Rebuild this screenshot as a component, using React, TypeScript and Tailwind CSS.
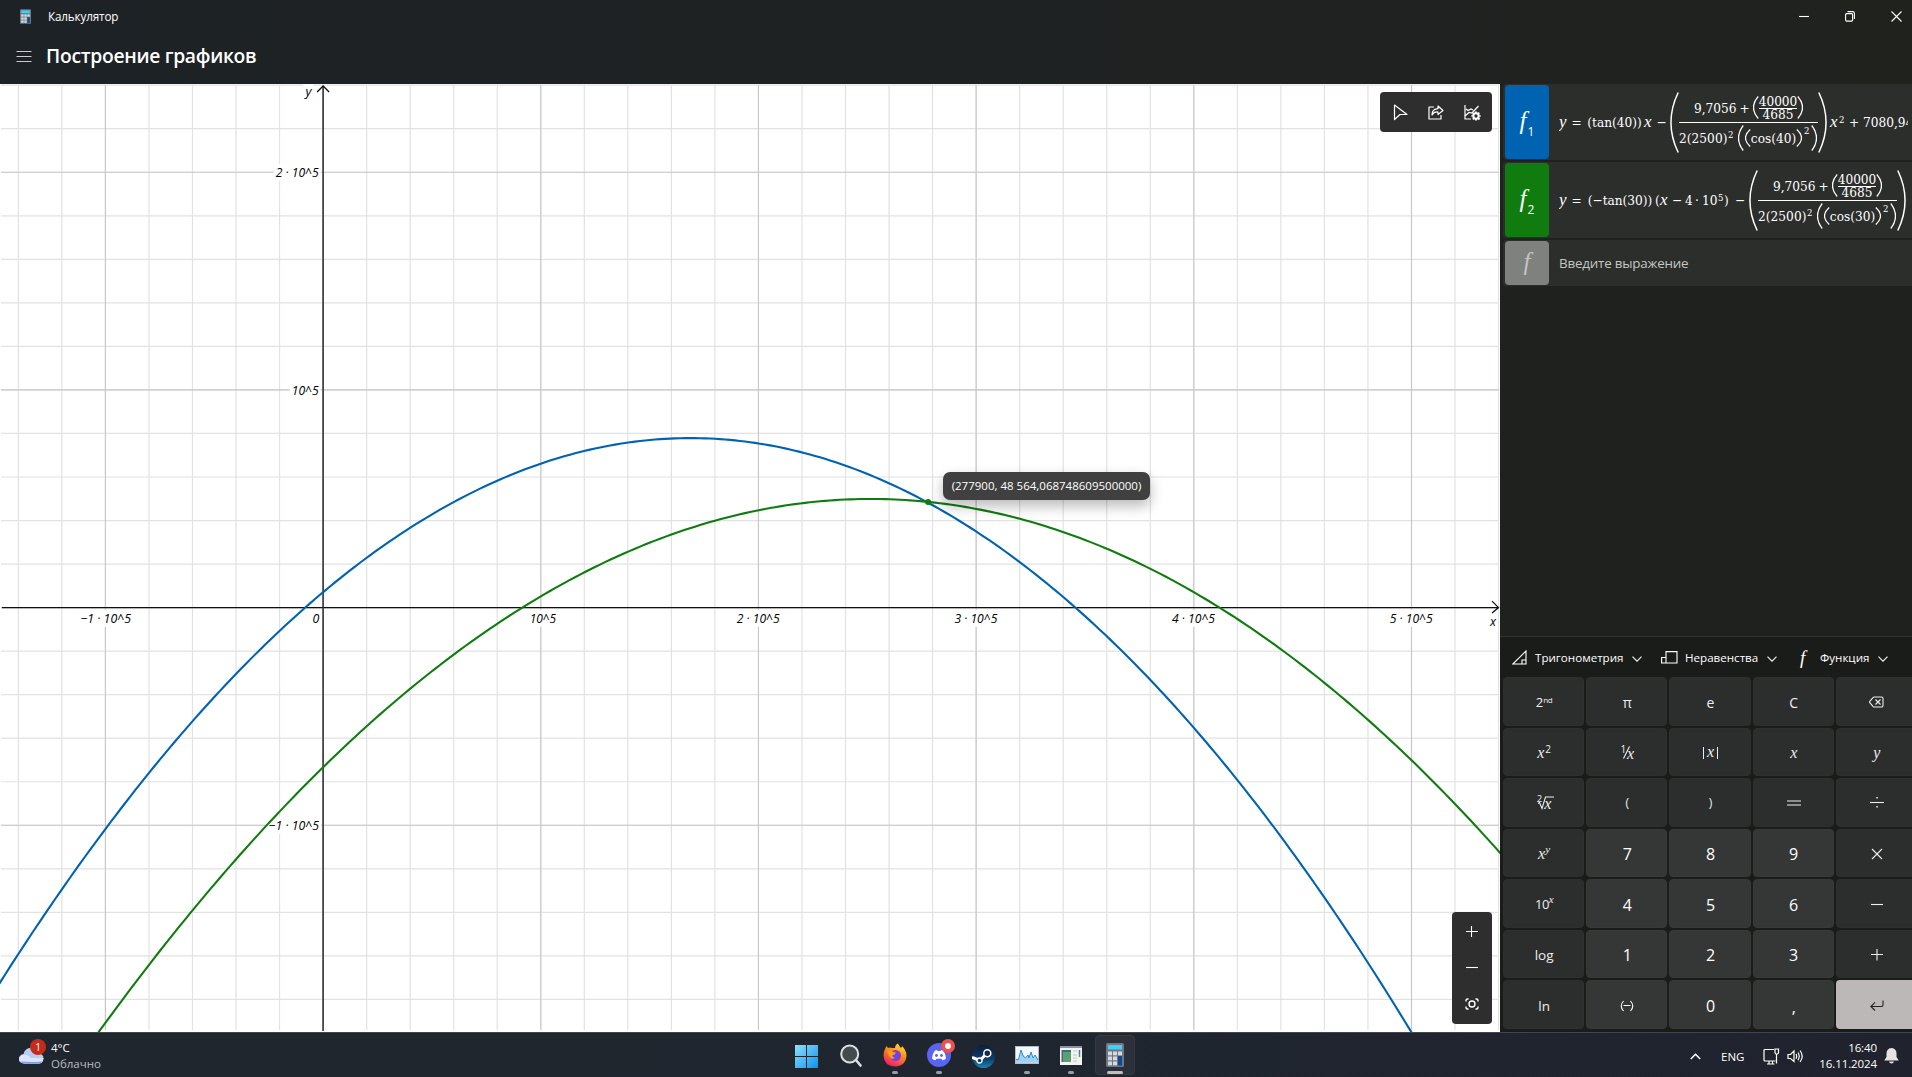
import React from "react";

const UI = "font-['Open_Sans','Noto_Sans',sans-serif]";
const MATH = "font-['DejaVu_Serif_Condensed','DejaVu_Serif',serif]";

/* ---------- graph ---------- */

const W = 1500;
const H = 948;
const X0 = 323.1;
const Y0 = 523.6;
const UNIT = 217.68;
const K = UNIT / 100000;

const rad = (d: number) => (d * Math.PI) / 180;
const G = 9.7056 + 40000 / 4685;
const drag = (deg: number) => G / (2 * 2500 * 2500 * Math.cos(rad(deg)) ** 2);
const f1 = (x: number) => Math.tan(rad(40)) * x - drag(40) * x * x + 7080.94;
const f2 = (x: number) => {
  const u = x - 400000;
  return -Math.tan(rad(30)) * u - drag(30) * u * u + 7080.94;
};

function curve(f: (x: number) => number) {
  const pts: string[] = [];
  for (let px = -5; px <= W + 5; px += 5) {
    pts.push(`${px},${(Y0 - f((px - X0) / K) * K).toFixed(2)}`);
  }
  return "M" + pts.join("L");
}

const steps = (from: number, to: number) => Array.from({ length: to - from + 1 }, (_, i) => from + i);

function Label({ x, y, w, children }: { x: number; y: number; w: number; children: string }) {
  return (
    <g>
      <rect x={x - 2} y={y - 13} width={w + 4} height={17} fill="#fff" />
      <text x={x} y={y} textLength={w} lengthAdjust="spacingAndGlyphs">
        {children}
      </text>
    </g>
  );
}

function Graph() {
  return (
    <svg width={W} height={H} viewBox={`0 0 ${W} ${H}`} className="block">
      <rect width={W} height={H} fill="#fff" />
      <g stroke="#e2e2e2" strokeWidth="1.2">
        {steps(-7, 27).map((i) => (
          <line key={"v" + i} x1={X0 + (i * UNIT) / 5} x2={X0 + (i * UNIT) / 5} y1="1" y2={H - 2} />
        ))}
        {steps(-9, 12).map((i) => (
          <line key={"h" + i} y1={Y0 - (i * UNIT) / 5} y2={Y0 - (i * UNIT) / 5} x1="1" x2={W - 1} />
        ))}
      </g>
      <g stroke="#c8c8c8" strokeWidth="1.1">
        {steps(-1, 5).map((i) => (
          <line key={"v" + i} x1={X0 + i * UNIT} x2={X0 + i * UNIT} y1="1" y2={H - 2} />
        ))}
        {steps(-1, 2).map((i) => (
          <line key={"h" + i} y1={Y0 - i * UNIT} y2={Y0 - i * UNIT} x1="1" x2={W - 1} />
        ))}
      </g>
      <g className="font-['Open_Sans','Noto_Sans',sans-serif] italic" fontSize="12.5" fill="#000">
        <Label x={275.7} y={92.8} w={43}>2 · 10^5</Label>
        <Label x={291.7} y={310.6} w={27}>10^5</Label>
        <Label x={268.6} y={745.8} w={50.5}>−1 · 10^5</Label>
        <Label x={80.5} y={538.8} w={50.5}>−1 · 10^5</Label>
        <Label x={312.5} y={538.8} w={6.8}>0</Label>
        <Label x={529.7} y={538.8} w={26.5}>10^5</Label>
        <Label x={736.7} y={538.8} w={43}>2 · 10^5</Label>
        <Label x={954.4} y={538.8} w={43}>3 · 10^5</Label>
        <Label x={1172} y={538.8} w={43}>4 · 10^5</Label>
        <Label x={1389.7} y={538.8} w={43}>5 · 10^5</Label>
        <Label x={305.5} y={12} w={6}>y</Label>
        <Label x={1490} y={542} w={6}>x</Label>
      </g>
      <g fill="none" strokeWidth="1.3">
        <path d={`M2 ${Y0}H1498M1492 ${Y0 - 6.5}L1498.5 ${Y0}L1492 ${Y0 + 5.5}`} stroke="#111" />
        <path d={`M${X0} 2V${H - 1}`} stroke="#2c2c30" strokeWidth="1.5" />
        <path d={`M${X0 - 6} 8L${X0} 2L${X0 + 6} 8`} stroke="#111" />
      </g>
      <path d={curve(f1)} fill="none" stroke="#0063b1" strokeWidth="2.1" />
      <path d={curve(f2)} fill="none" stroke="#107c10" strokeWidth="2.1" />
      <circle cx={X0 + 277900 * K} cy={Y0 - 48564.07 * K} r="3" fill="#107c10" />
    </svg>
  );
}

/* ---------- formulas ---------- */

function Paren({ w, h, flip, sw = 1.3 }: { w: number; h: number; flip?: boolean; sw?: number }) {
  const d = flip
    ? `M0.8 0.5Q${w * 1.7} ${h / 2} 0.8 ${h - 0.5}`
    : `M${w - 0.8} 0.5Q${-w * 0.7} ${h / 2} ${w - 0.8} ${h - 0.5}`;
  return (
    <svg width={w} height={h} className="shrink-0">
      <path d={d} fill="none" stroke="#fff" strokeWidth={sw} />
    </svg>
  );
}

function BigFraction({ angle }: { angle: number }) {
  return (
    <>
      <Paren w={9} h={61} sw={1.5} />
      <div className="flex h-[59px] w-[139px] shrink-0 flex-col items-center">
        <div className="flex h-[29px] w-full items-center justify-center pt-[1px]">
          <span className="w-[42px]">9,7056</span>
          <span className="w-[17px] text-center">+</span>
          <Paren w={6} h={23} />
          <div className="flex w-[38px] flex-col items-center leading-[11px]">
            <span className="h-[12px]">40000</span>
            <span className="h-px w-full bg-white" />
            <span className="h-[11px]">4685</span>
          </div>
          <Paren w={6} h={23} flip />
        </div>
        <div className="h-px w-full shrink-0 bg-white" />
        <div className="flex h-[29px] w-full items-center pt-px">
          <span className="w-[49px] shrink-0 tracking-[0.05px]">2(2500)</span>
          <span className="w-[10px] shrink-0 pb-[5px] text-[9.5px]">2</span>
          <Paren w={6} h={26} />
          <span className="w-px shrink-0" />
          <Paren w={6} h={18} />
          <span className="flex w-[45px] shrink-0 justify-center">cos({angle})</span>
          <Paren w={6} h={18} flip />
          <span className="w-[9px] shrink-0 pb-[14px] pl-[2px] text-[9.5px]">2</span>
          <Paren w={6} h={26} flip />
        </div>
      </div>
      <Paren w={9} h={61} flip sw={1.5} />
    </>
  );
}

const V = ({ children }: { children: string }) => (
  <span className="w-[9px] shrink-0 font-['Liberation_Serif',serif] text-[17px] italic">{children}</span>
);

function Row({ color, index, children }: { color: string; index: string; children: React.ReactNode }) {
  return (
    <div className="flex h-[76px] items-center rounded-l bg-[#2c2e2c] pl-[2px]">
      <div className={`flex h-[74px] w-[44px] shrink-0 items-center justify-center rounded-[4px] text-white ${color}`}>
        <span className="pb-[3px] font-['Liberation_Serif',serif] text-[25px] italic">f</span>
        <span className="ml-px pt-[20px] font-['Open_Sans',sans-serif] text-[12px]">{index}</span>
      </div>
      <div
        className={`ml-[10px] flex w-[349px] items-center overflow-hidden text-[13.5px] leading-[16px] whitespace-nowrap text-white ${MATH}`}
      >
        {children}
      </div>
    </div>
  );
}

/* ---------- keypad ---------- */

const X = <span className="font-['Liberation_Serif',serif] text-[16px] italic">x</span>;
const Sup = ({ children }: { children: string }) => (
  <sup className="font-['Liberation_Serif',serif] text-[11px] italic">{children}</sup>
);

const ico = { fill: "none", stroke: "currentColor", strokeWidth: 1.1 } as const;

const KEYS: { k: string; c: React.ReactNode; n?: boolean }[] = [
  { k: "2nd", c: <span>2<sup className="text-[8px] tracking-[-0.3px]">nd</sup></span> },
  { k: "pi", c: <span className="text-[14px]">π</span> },
  { k: "e", c: <span className="text-[14px]">e</span> },
  { k: "C", c: <span className="text-[14px]">C</span> },
  {
    k: "bs",
    c: (
      <svg width="15" height="12" viewBox="0 0 15 12" {...ico}>
        <path d="M5.2 1H12.5A1.5 1.5 0 0 1 14 2.5V9.5A1.5 1.5 0 0 1 12.5 11H5.2Q4.6 11 4.2 10.6L.8 6.7Q.3 6 .8 5.3L4.2 1.4Q4.6 1 5.2 1ZM6.5 3.5L11.5 8.5M11.5 3.5L6.5 8.5" />
      </svg>
    ),
  },
  { k: "x2", c: <span>{X}<sup className="ml-px text-[10px]">2</sup></span> },
  {
    k: "1/x",
    c: (
      <span className="flex items-center">
        <span className="pb-[7px] text-[10px]">1</span>
        <svg width="7" height="13" className="mx-[-3px]" {...ico}><path d="M6.5 .5L.5 12.5" /></svg>
        <span className="pt-[2px] font-['Liberation_Serif',serif] text-[16px] italic">x</span>
      </span>
    ),
  },
  {
    k: "abs",
    c: (
      <span className="flex items-center gap-[3px]">
        <span className="h-[12px] w-px bg-current" />
        <span className="pb-px font-['Liberation_Serif',serif] text-[16px] leading-[16px] italic">x</span>
        <span className="h-[12px] w-px bg-current" />
      </span>
    ),
  },
  { k: "x", c: <span className="pt-[1px]">{X}</span> },
  { k: "y", c: <span className="pt-[1px] font-['Liberation_Serif',serif] text-[16px] italic">y</span> },
  {
    k: "root",
    c: (
      <span className="flex items-center">
        <span className="pb-[9px] text-[9.5px] leading-[9px]">2</span>
        <svg width="16" height="14" className="-mr-[10px] -ml-[4px]" {...ico}><path d="M0 7.5L1.5 6.5L4 12.5L7.5 1H16" /></svg>
        <span className="pt-[2px] font-['Liberation_Serif',serif] text-[16px] leading-[12px] italic">x</span>
      </span>
    ),
  },
  { k: "(", c: <span className="text-[12px]">(</span> },
  { k: ")", c: <span className="text-[12px]">)</span> },
  { k: "=", c: <svg width="14" height="7" {...ico}><path d="M0 1H14M0 5H14" /></svg> },
  {
    k: "div",
    c: (
      <svg width="14" height="12" {...ico}>
        <path d="M0 5.5H14" />
        <rect x="6.3" y="0" width="1.5" height="1.5" fill="currentColor" stroke="none" />
        <rect x="6.3" y="9" width="1.5" height="1.5" fill="currentColor" stroke="none" />
      </svg>
    ),
  },
  { k: "xy", c: <span>{X}<Sup>y</Sup></span> },
  { k: "7", c: "7", n: true },
  { k: "8", c: "8", n: true },
  { k: "9", c: "9", n: true },
  { k: "mul", c: <svg width="12" height="12" {...ico}><path d="M1 1L11 11M11 1L1 11" /></svg> },
  { k: "10x", c: <span className="tracking-[-0.5px]">10<Sup>x</Sup></span> },
  { k: "4", c: "4", n: true },
  { k: "5", c: "5", n: true },
  { k: "6", c: "6", n: true },
  { k: "sub", c: <svg width="12" height="12" {...ico}><path d="M0 5.5H12" /></svg> },
  { k: "log", c: <span className="text-[13.5px]">log</span> },
  { k: "1", c: "1", n: true },
  { k: "2", c: "2", n: true },
  { k: "3", c: "3", n: true },
  { k: "add", c: <svg width="12" height="12" {...ico}><path d="M0 5.5H12M6 0V11.5" /></svg> },
  { k: "ln", c: <span className="text-[13.5px]">ln</span> },
  {
    k: "neg",
    c: <svg width="14" height="12" {...ico}><path d="M3.5 1Q-1 6 3.5 11M10.5 1Q15 6 10.5 11M3.5 5.5H10.5" /></svg>,
    n: true,
  },
  { k: "0", c: "0", n: true },
  { k: ",", c: <span className="pt-[3px]">,</span>, n: true },
  {
    k: "enter",
    c: <svg width="14" height="12" {...ico}><path d="M13 .5V5Q13 6.5 11.5 6.5H1M5 2.300L.9 6.500L5 10.500" /></svg>,
  },
];

const Chevron = () => (
  <svg width="10" height="6" fill="none" stroke="#eee" strokeWidth="1.2" className="mt-[2px] shrink-0">
    <path d="M.5 .7L5 5.2L9.5 .7" />
  </svg>
);

/* ---------- shared icons ---------- */

function CalcIcon({ w, h }: { w: number; h: number }) {
  return (
    <svg width={w} height={h} viewBox="0 0 18 24">
      <rect width="18" height="24" rx="1.5" fill="#6f7881" />
      <rect x="2" y="2" width="14" height="4.5" fill="#3fd0f5" />
      {[8.5, 13.5, 18.5].map((y) =>
        [2, 7, 12].map((x) =>
          x === 12 && y > 9 ? null : <rect key={`${x}-${y}`} x={x} y={y} width="4" height="3.8" fill="#d5dadf" />
        )
      )}
      <rect x="12" y="13" width="4" height="9.5" fill="#114a8b" />
    </svg>
  );
}

function TaskItem({ w, children, dot }: { w: number; children: React.ReactNode; dot?: boolean }) {
  return (
    <div className="relative flex h-[40px] shrink-0 items-center justify-center" style={{ width: w }}>
      {children}
      {dot && <span className="absolute bottom-[1px] h-[3px] w-[6px] rounded-full bg-[#9b9da2]" />}
    </div>
  );
}

/* ---------- page ---------- */

export default function App() {
  return (
    <div className={`flex h-[1077px] w-[1912px] flex-col overflow-hidden bg-[#1f211f] text-white ${UI}`}>
      <header className="flex h-[84px] shrink-0 flex-col bg-linear-to-r from-[#1d2226] to-[#20221e]">
        <div className="flex h-[33px] items-center pl-[20px]">
          <CalcIcon w={11} h={15} />
          <span className="ml-[17px] text-[11.7px] tracking-[-0.15px]">Калькулятор</span>
          <div className="mr-[10px] ml-auto flex items-center gap-[36px]">
            <svg width="10" height="10" {...ico}><path d="M0 4.5H10" /></svg>
            <svg width="10" height="11" {...ico}>
              <rect x=".6" y="2.6" width="7" height="7.5" rx="1" />
              <path d="M2.5 .6H7.5Q9.4 .6 9.4 2.5V8" />
            </svg>
            <svg width="11" height="11" {...ico}><path d="M.5 .5L10.5 10.5M10.5 .5L.5 10.5" /></svg>
          </div>
        </div>
        <div className="flex h-[46px] items-center pl-[16px]">
          <svg width="16" height="11" fill="none" stroke="#c9cccd" strokeWidth="1"><path d="M.5 .5H15.5M.5 5.5H15.5M.5 10.5H15.5" /></svg>
          <h1 className="ml-[14px] text-[19.3px] font-semibold tracking-[-0.3px]">Построение графиков</h1>
        </div>
      </header>

      <main className="flex h-[948px] shrink-0">
        <section className="relative w-[1500px] shrink-0">
          <Graph />
          <div className="absolute top-[8px] left-[1380px] flex h-[40px] w-[112px] items-center justify-between rounded-[4px] bg-[#2e2e2f] pr-[11px] pl-[13px]">
            <svg width="15" height="17" {...ico} strokeWidth="1.2"><path d="M1.500 1L14 10.500H7L1.500 15.500Z" strokeLinejoin="round" /></svg>
            <svg width="16" height="15" {...ico} strokeWidth="1.2" strokeLinejoin="round">
              <path d="M6 2H1V14H13V10" />
              <path d="M10 1L15 5.5L10 9.5V7Q6 6.5 4 10Q4 4 10 3.7Z" />
            </svg>
            <svg width="17" height="17" {...ico} strokeWidth="1.2">
              <path d="M1 1V15H7M1 12L5 8.500L8 9L14.5 2M2 5L4 6.500L7 5L9 6" />
              <circle cx="12" cy="12" r="2.7" strokeWidth="2" />
              <path d="M12 7.500V9M12 15V16.500M7.500 12H8.500M15.500 12H16.500M8.800 8.800L9.800 9.800M14.500 14.500L15.500 15.500M15.300 8.700L14.300 9.700M8.800 15.300L9.800 14.300" strokeWidth="1.8" />
            </svg>
          </div>
          <div className="absolute top-[388px] left-[943px] flex h-[28px] w-[207px] items-center justify-center rounded-[7px] bg-[#404040] text-[11.5px] whitespace-nowrap shadow-[0_6px_14px_rgba(0,0,0,0.28)]">
            (277900, 48 564,068748609500000)
          </div>
          <div className="absolute top-[828px] left-[1452px] flex h-[112px] w-[40px] flex-col items-center rounded-[4px] bg-[#2e2e2f] pt-[13px]">
            <svg width="12" height="12" {...ico}><path d="M0 6.5H12M5.5 1V12" /></svg>
            <svg width="12" height="12" className="mt-[24px]" {...ico}><path d="M0 6.5H12" /></svg>
            <svg width="14" height="12" className="mt-[25px]" {...ico} strokeWidth="1.4">
              <circle cx="7" cy="6" r="3" />
              <path d="M1 3.5V2.5Q1 1 2.5 1H3.5M10.5 1H11.5Q13 1 13 2.5V3.5M1 8.5V9.5Q1 11 2.5 11H3.5M10.5 11H11.5Q13 11 13 9.5V8.5" />
            </svg>
          </div>
        </section>

        <aside className="flex w-[412px] flex-col">
          <div className="flex h-[552px] shrink-0 flex-col gap-[2px] pl-[3px]">
            <Row color="bg-[#0063b1]" index="1">
              <V>y</V>
              <span className="w-[17px] shrink-0 text-center">=</span>
              <span className="flex w-[59px] shrink-0 justify-center">(tan(40))</span>
              <V>x</V>
              <span className="w-[17px] shrink-0 text-center">−</span>
              <BigFraction angle={40} />
              <span className="w-[3px] shrink-0" />
              <V>x</V>
              <span className="w-[6px] shrink-0 pb-[5px] text-[9.5px]">2</span>
              <span className="w-[18px] shrink-0 text-center">+</span>
              <span className="shrink-0">7080,94</span>
            </Row>
            <Row color="bg-[#107c10]" index="2">
              <V>y</V>
              <span className="w-[17px] shrink-0 text-center">=</span>
              <span className="flex w-[70px] shrink-0 justify-center">(−tan(30))</span>
              <span className="w-[5px] shrink-0">(</span>
              <V>x</V>
              <span className="w-[16px] shrink-0 text-center">−</span>
              <span className="w-[10px] shrink-0">4</span>
              <span className="w-[7px] shrink-0">·</span>
              <span className="w-[16px] shrink-0">10</span>
              <span className="w-[6px] shrink-0 pb-[5px] text-[9.5px]">5</span>
              <span className="w-[7px] shrink-0">)</span>
              <span className="w-[18px] shrink-0 text-center">−</span>
              <BigFraction angle={30} />
            </Row>
            <div className="flex h-[46px] items-center rounded-l bg-[#2c2e2c] pl-[2px]">
              <div className="flex h-[44px] w-[44px] items-center justify-center rounded-[4px] bg-[#7f817f] pb-[3px] font-['Liberation_Serif',serif] text-[25px] text-[#c3c4c3] italic">
                f
              </div>
              <span className="ml-[10px] text-[13.4px] tracking-[-0.2px] text-[#c5c6c5]">Введите выражение</span>
            </div>
          </div>

          <div className="flex h-[396px] shrink-0 flex-col border-t border-[#303230] bg-[#1a1c1a]">
            <div className="flex h-[40px] shrink-0 items-center pt-[1px] pl-[12px] text-[11.6px] whitespace-nowrap">
              <svg width="15" height="15" {...ico}><path d="M.8 14H14V1ZM10 14V10H14" /></svg>
              <span className="ml-[8px] w-[97px]">Тригонометрия</span>
              <Chevron />
              <svg width="17" height="13" className="ml-[19px]" {...ico}><path d="M5 .6H16V12H5ZM5 6.5H.6V12H5" /></svg>
              <span className="ml-[7px] w-[82px]">Неравенства</span>
              <Chevron />
              <span className="ml-[23px] w-[20px] font-['Liberation_Serif',serif] text-[19px] leading-none italic">f</span>
              <span className="w-[58px]">Функция</span>
              <Chevron />
            </div>
            <div className="w-[412px] overflow-hidden pl-[3px]">
              <div className="grid h-[352px] w-[414px] grid-cols-5 grid-rows-7 gap-[2px]">
                {KEYS.map(({ k, c, n }) => (
                  <div
                    key={k}
                    className={
                      "flex items-center justify-center rounded-[4px] pt-[2px] pl-px " +
                      (k === "enter"
                        ? "bg-[#bcb8b7] text-[#222]"
                        : n
                          ? "border border-[#383a3a] bg-[#353737] text-[16px]"
                          : "border border-[#2e3030] bg-[#2c2e2e] text-[13px] text-[#eee]")
                    }
                  >
                    {c}
                  </div>
                ))}
              </div>
            </div>
          </div>
        </aside>
      </main>

      <footer className="flex h-[45px] shrink-0 items-center border-t border-[#42454a] bg-linear-to-r from-[#20262d] via-[#1f262f] to-[#20232e]">
        <div className="flex w-[795px] items-center">
          <div className="relative ml-[19px] h-[24px] w-[27px]">
            <svg width="25" height="17" viewBox="0 0 25 17" className="mt-[4px]">
              <path d="M5 16.5Q0 16 0 11.5Q.5 7.5 4.5 7Q6 1 12 .8Q18 1 19.5 6Q24.5 7 24.5 11.5Q24 16 20 16.5Z" fill="#b9cdf3" />
              <path d="M0 11.5Q1 8 4.5 8Q9 7 11.5 11H24.5Q24 16.5 20 16.5H5Q0 16 0 11.5Z" fill="#dbe6fa" />
              <path d="M1 14.5Q3 16.5 6 16.5H19Q22.500 16.500 24 14Q20 15.500 1 14.500Z" fill="#7ba2e8" />
            </svg>
            <span className="absolute top-[-4px] left-[11px] flex h-[16px] w-[16px] items-center justify-center rounded-full bg-[#c42b1c] text-[10px]">1</span>
          </div>
          <div className="ml-[5px] pt-[2px] text-[11.5px] leading-[16px]">
            <div>4°C</div>
            <div className="text-[#b9bcc0]">Облачно</div>
          </div>
        </div>

        <div className="flex w-[340px] shrink-0 items-center">
          <svg width="23" height="23" viewBox="0 0 23 23" className="mt-[2px]">
            <defs>
              <linearGradient id="win" x1="0" y1="0" x2="1" y2="1">
                <stop offset="0" stopColor="#8fe0fc" />
                <stop offset="1" stopColor="#0a93ee" />
              </linearGradient>
            </defs>
            <path d="M0 0H11V11H0ZM12 0H23V11H12ZM0 12H11V23H0ZM12 12H23V23H12Z" fill="url(#win)" />
          </svg>
          <TaskItem w={66}>
            <svg width="23" height="23" viewBox="0 0 23 23" className="mt-px">
              <circle cx="9.7" cy="10" r="8.5" fill="#454a51" stroke="#dcdfe3" strokeWidth="2" />
              <path d="M16 16L20.500 21.500" stroke="#dcdfe3" strokeWidth="2.6" strokeLinecap="round" />
            </svg>
          </TaskItem>
          <TaskItem w={22} dot>
            <svg width="24" height="24" viewBox="0 0 24 24" className="shrink-0">
              <defs>
                <linearGradient id="fox" x1=".8" y1="0" x2=".3" y2="1">
                  <stop offset="0" stopColor="#ffe63a" />
                  <stop offset=".45" stopColor="#ff8a16" />
                  <stop offset="1" stopColor="#f5156c" />
                </linearGradient>
              </defs>
              <path d="M2 6L3.5 3L5 5Q7 4 9 5L12 5Q12 2 15 .5Q16 3 18 5Q19 4 19 3Q23 7 23.5 12Q23 23 12 23.5Q1 23 .5 12.5Q.5 9 2 6Z" fill="url(#fox)" />
              <circle cx="12.5" cy="12.5" r="5.5" fill="#7a3fe0" />
              <path d="M4 8Q8 6.5 10 9L13 9.5Q12 12 9.5 12Q9 14 12 15Q8 17 6 13Z" fill="#ffa01c" />
            </svg>
          </TaskItem>
          <TaskItem w={66} dot>
            <svg width="24" height="24" viewBox="0 0 24 24">
              <circle cx="12" cy="12" r="12" fill="#5865f2" />
              <path d="M8 7.5L10 7L10.5 8H13.5L14 7L16 7.5Q19 11 19 15.5Q17.5 17 15.5 17.2L14.5 15.8H9.5L8.5 17.2Q6.5 17 5 15.5Q5 11 8 7.5Z" fill="#fff" />
              <circle cx="9.5" cy="12.5" r="1.4" fill="#5865f2" />
              <circle cx="14.5" cy="12.5" r="1.4" fill="#5865f2" />
            </svg>
            <span className="absolute top-[4px] left-[35px] h-[14px] w-[14px] rounded-full border-[4px] border-[#f0504e] bg-white" />
          </TaskItem>
          <TaskItem w={22}>
            <svg width="23" height="23" viewBox="0 0 23 23" className="mt-[2px] shrink-0">
              <defs>
                <linearGradient id="steam" x1="0" y1="0" x2="0" y2="1">
                  <stop offset="0" stopColor="#111d3e" />
                  <stop offset=".6" stopColor="#0d3c6e" />
                  <stop offset="1" stopColor="#1387b8" />
                </linearGradient>
              </defs>
              <circle cx="11.5" cy="11.5" r="11.5" fill="url(#steam)" />
              <path d="M0 12.5L8 15.5L15 8" stroke="#fff" strokeWidth="3" fill="none" />
              <circle cx="7.5" cy="15.5" r="2.5" fill="#0d3c6e" stroke="#fff" strokeWidth="1.3" />
              <circle cx="15.3" cy="8.2" r="3.5" fill="#15264b" stroke="#fff" strokeWidth="1.5" />
            </svg>
          </TaskItem>
          <TaskItem w={66} dot>
            <svg width="24" height="18" viewBox="0 0 24 18">
              <rect width="24" height="18" fill="#b5bcc3" />
              <rect x="1" y="1" width="22" height="15.5" fill="#f2f7fb" />
              <path d="M1 13L4 13L6 4L9 10L11 12L13 9L14 11L16 6L18 12L20 9L23 14V16.5H1Z" fill="#9fd3f5" />
              <path d="M1 13.5H3.5L6 4L8 10L10.5 12L13 9L14 12L16 6L18 12L20 9L23 14" fill="none" stroke="#2d8dd0" strokeWidth="1" />
            </svg>
          </TaskItem>
          <TaskItem w={22} dot>
            <svg width="22" height="19" viewBox="0 0 22 19" className="shrink-0">
              <rect width="22" height="19" fill="#f3f3f1" />
              <rect width="22" height="2" fill="#8e939b" />
              <rect x="1.5" y="4" width="9.5" height="12" fill="#46688d" />
              <rect x="3" y="6" width="8" height="10" fill="#5da06f" />
              <path d="M13 5H17M13 9H17M13 12H17M13 15H17" stroke="#c4c6c8" />
              <path d="M19.5 4V8" stroke="#3b78c0" strokeWidth="1.5" />
              <path d="M19.5 8V11" stroke="#49a349" strokeWidth="1.5" />
            </svg>
          </TaskItem>
          <div className="relative ml-[13px] flex h-[40px] w-[40px] items-center justify-center rounded-[4px] border border-[#353a43] bg-[#2c303a]">
            <CalcIcon w={18} h={24} />
            <span className="absolute bottom-0 h-[3px] w-[16px] rounded-full bg-[#c3bdbc]" />
          </div>
        </div>

        <div className="ml-auto flex items-center pt-[2px] pr-[13px]">
          <svg width="11" height="7" fill="none" stroke="#fff" strokeWidth="1.6"><path d="M.8 6L5.5 1.3L10.2 6" /></svg>
          <span className="ml-[20px] w-[24px] pt-px text-[11.5px]">ENG</span>
          <svg width="17" height="17" className="ml-[18px]" {...ico} strokeWidth="1.2">
            <path d="M11 1.5H2Q1 1.5 1 2.5V12Q1 13 2 13H12.5M4 16H11.5M6 13V16M9.5 13V16M13.5 6V15.5" />
            <path d="M12 1H15.5V4.5Q15.5 6 14 6H13.5Q12 6 12 4.5Z" />
          </svg>
          <svg width="17" height="15" className="ml-[7px]" {...ico} strokeWidth="1.2">
            <path d="M1 5.5H3.5L7 2V12.5L3.5 9.5H1ZM9 5Q10.3 7.3 9 9.7M11 3.5Q13.5 7.3 11 11.2M13 1.5Q17.5 7.3 13 13" />
          </svg>
          <div className="ml-[15px] w-[58px] text-right text-[11.5px] leading-[16px] tracking-[-0.1px]">
            <div>16:40</div>
            <div>16.11.2024</div>
          </div>
          <svg width="15" height="16" viewBox="0 0 15 16" className="ml-[7px]">
            <path d="M7.5 0Q12.5 .5 12.5 5.5V9L14.5 12V12.5H.5V12L2.5 9V5.5Q2.5 .5 7.5 0ZM5 13.5H10Q9.5 15.5 7.5 15.5Q5.5 15.5 5 13.5Z" fill="#e6e4e2" />
          </svg>
        </div>
      </footer>
    </div>
  );
}
